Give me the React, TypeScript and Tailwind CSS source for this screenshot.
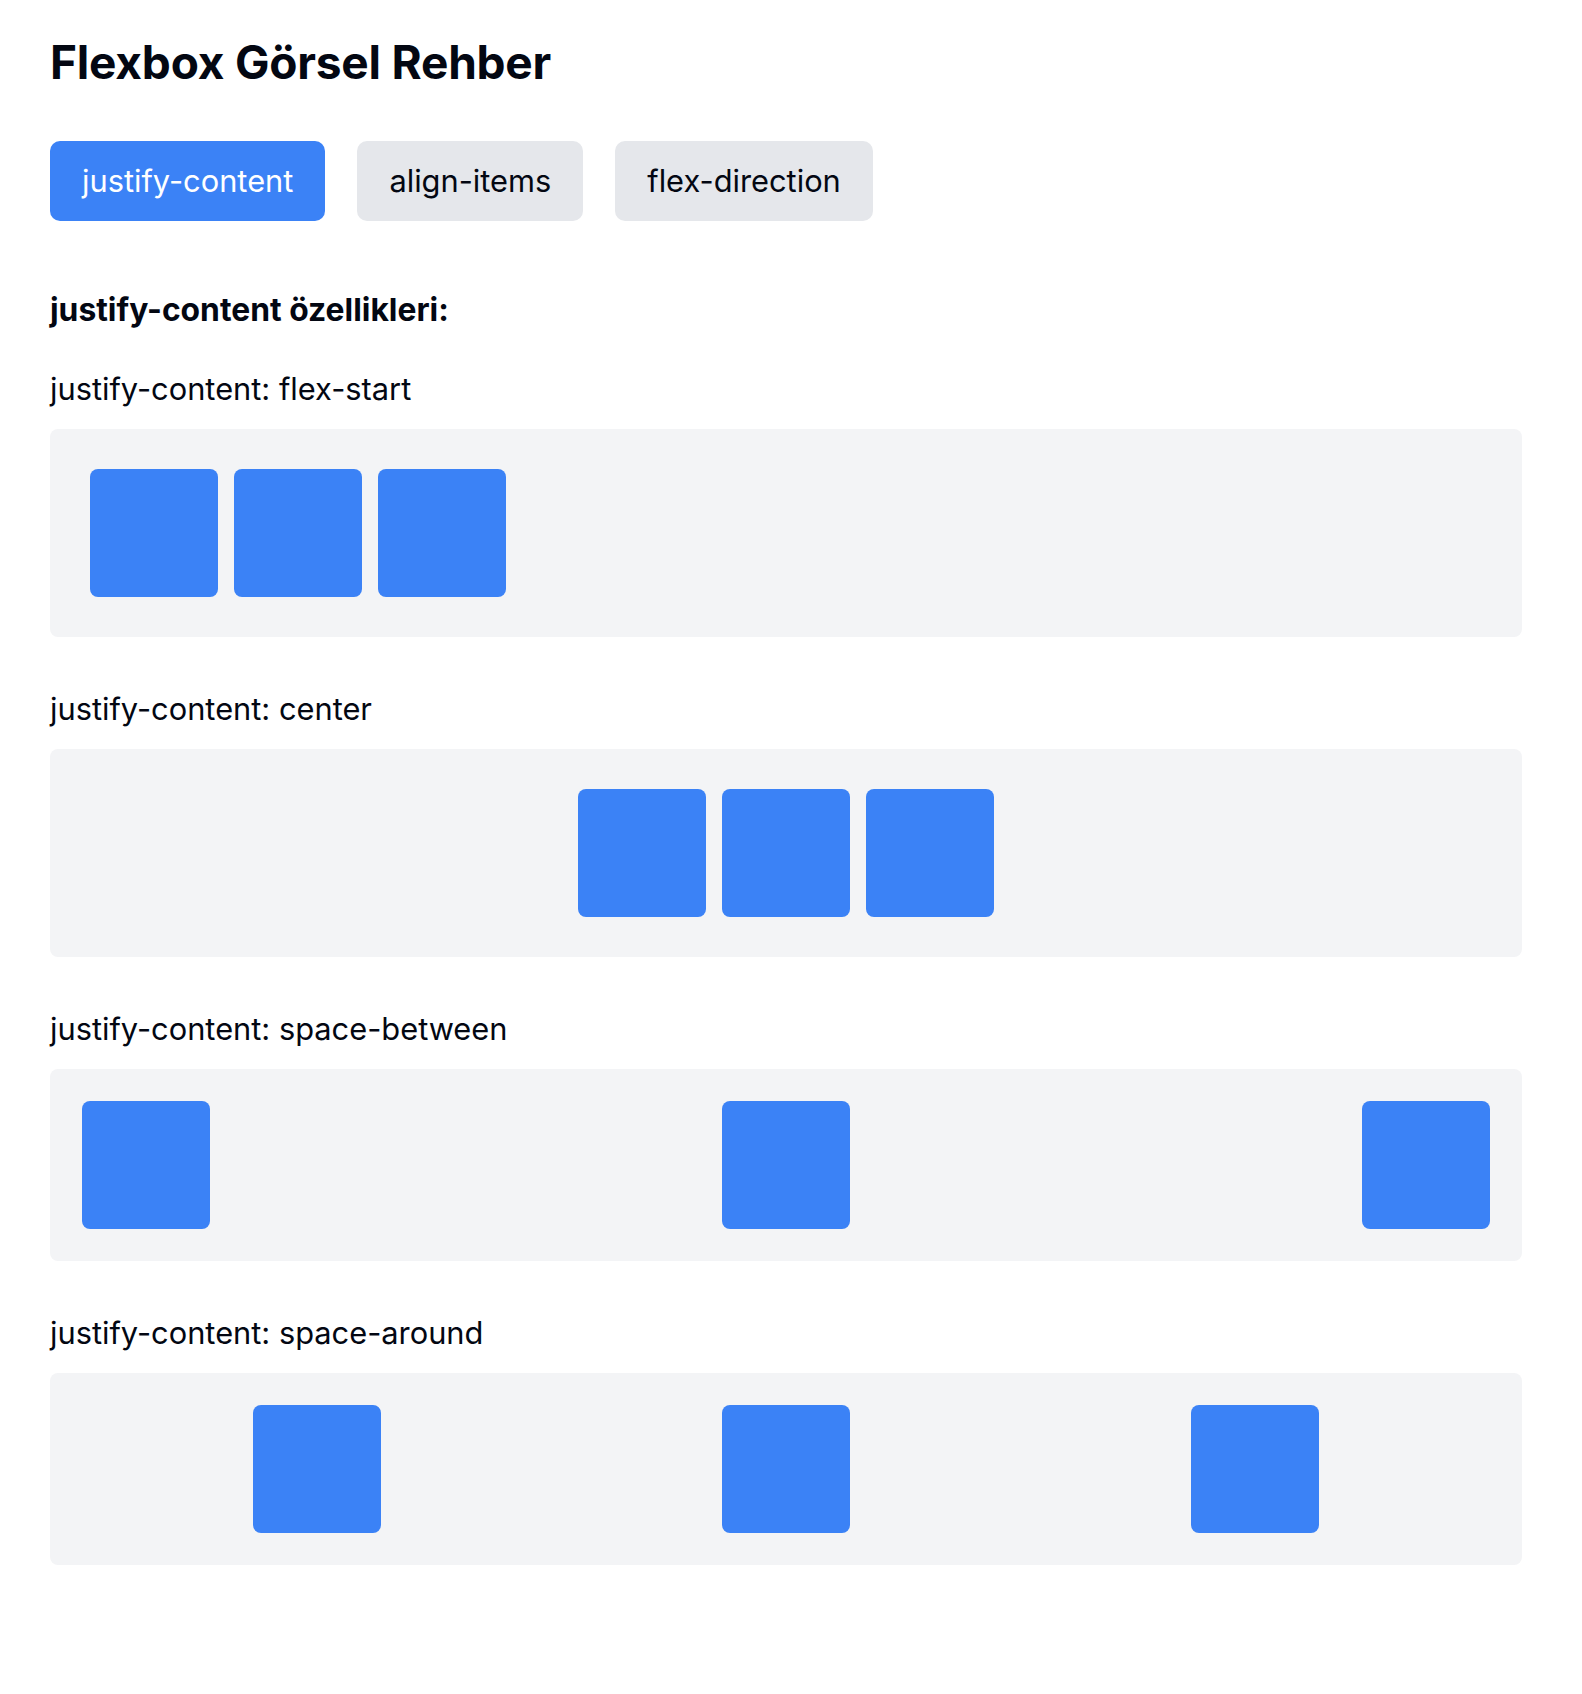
import { useState } from 'react';

const tabs = ['justify-content', 'align-items', 'flex-direction'];

function Box() {
  return <div className="w-[128px] h-[128px] shrink-0 rounded-[8px] bg-[#3b82f6]" />;
}

function Demo({ label, boxClass, itemClass }: { label: string; boxClass: string; itemClass?: string }) {
  return (
    <div className="flex flex-col">
      <div className="text-[30.8px] leading-[48px] mb-[16px]">{label}</div>
      <div className={`flex rounded-[8px] bg-[#f3f4f6] ${boxClass}`}>
        {[0, 1, 2].map((i) => (
          <div key={i} className={itemClass}>
            <Box />
          </div>
        ))}
      </div>
    </div>
  );
}

export default function App() {
  const [active, setActive] = useState('justify-content');

  return (
    <div
      className="min-h-[1694px] bg-white text-[#030712] pt-[30px] pl-[50px] pr-[60px]"
      style={{ fontFamily: 'Inter, "Noto Sans", sans-serif' }}
    >
      <h1 className="text-[46px] leading-[64px] font-bold tracking-[-0.2px] mb-[47px]">Flexbox Görsel Rehber</h1>

      <div className="flex gap-[32px]">
        {tabs.map((t) => (
          <button
            key={t}
            onClick={() => setActive(t)}
            className={`px-[32px] py-[16px] rounded-[10px] text-[30.8px] leading-[48px] ${
              active === t ? 'bg-[#3b82f6] text-white' : 'bg-[#e5e7eb] text-[#030712]'
            }`}
          >
            {t}
          </button>
        ))}
      </div>

      <div className="mt-[65px] text-[31.8px] leading-[48px] font-bold mb-[31px]">{active} özellikleri:</div>

      <div className="flex flex-col gap-[48px]">
        <Demo label="justify-content: flex-start" boxClass="justify-start p-[32px]" itemClass="m-[8px]" />
        <Demo label="justify-content: center" boxClass="justify-center p-[32px]" itemClass="m-[8px]" />
        <Demo label="justify-content: space-between" boxClass="justify-between p-[32px]" />
        <Demo label="justify-content: space-around" boxClass="justify-around p-[32px]" />
      </div>
    </div>
  );
}
